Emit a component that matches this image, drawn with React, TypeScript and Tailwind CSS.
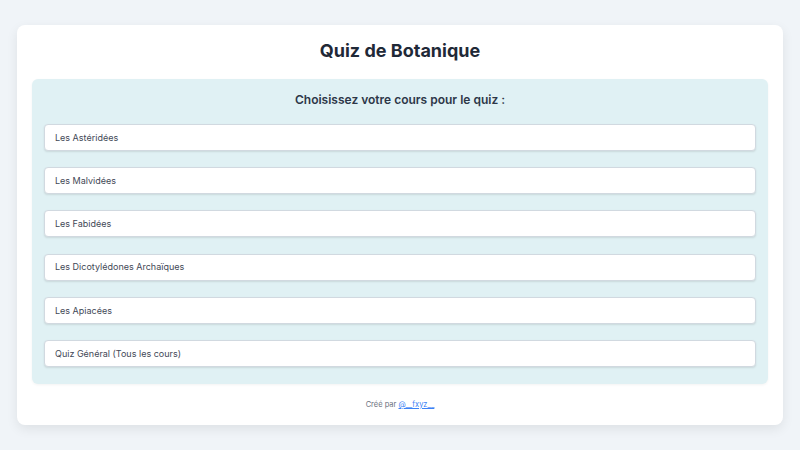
import React from 'react';

const courses = [
  'Les Astéridées',
  'Les Malvidées',
  'Les Fabidées',
  'Les Dicotylédones Archaïques',
  'Les Apiacées',
  'Quiz Général (Tous les cours)',
];

export default function App() {
  return (
    <div className="min-h-[450px] w-full bg-[#f0f4f8] pt-[25px] px-[17px] font-['Inter',sans-serif]">
      <div className="bg-white rounded-lg shadow-[0_4px_12px_rgba(0,0,0,0.08)] px-[15px] pt-[13px] pb-[15px]">
        {/* Title */}
        <h1 className="text-center text-[18px] leading-[26px] font-bold text-[#1f2937] mb-[15px]">
          Quiz de Botanique
        </h1>

        {/* Course picker */}
        <div className="bg-[#e0f1f4] rounded-md px-[12px] pt-[12px] pb-[17px] shadow-[0_1px_3px_rgba(0,0,0,0.05)]">
          <h2 className="text-center text-[12px] leading-[17px] font-semibold text-[#2d3748] mb-[16px]">
            Choisissez votre cours pour le quiz :
          </h2>
          <div className="flex flex-col gap-[16.2px]">
            {courses.map((c) => (
              <button
                key={c}
                className="h-[27px] w-full text-left px-[10px] bg-white border border-[#d1d9e0] rounded-[4px] shadow-[0_1px_2px_rgba(0,0,0,0.1)] text-[9px] text-[#3f4856]"
              >
                {c}
              </button>
            ))}
          </div>
        </div>

        {/* Footer */}
        <p className="text-center text-[7.5px] text-[#6b7280] mt-[15px]">
          Créé par <a className="text-[#3b82f6] underline">@__fxyz__</a>
        </p>
      </div>
    </div>
  );
}
